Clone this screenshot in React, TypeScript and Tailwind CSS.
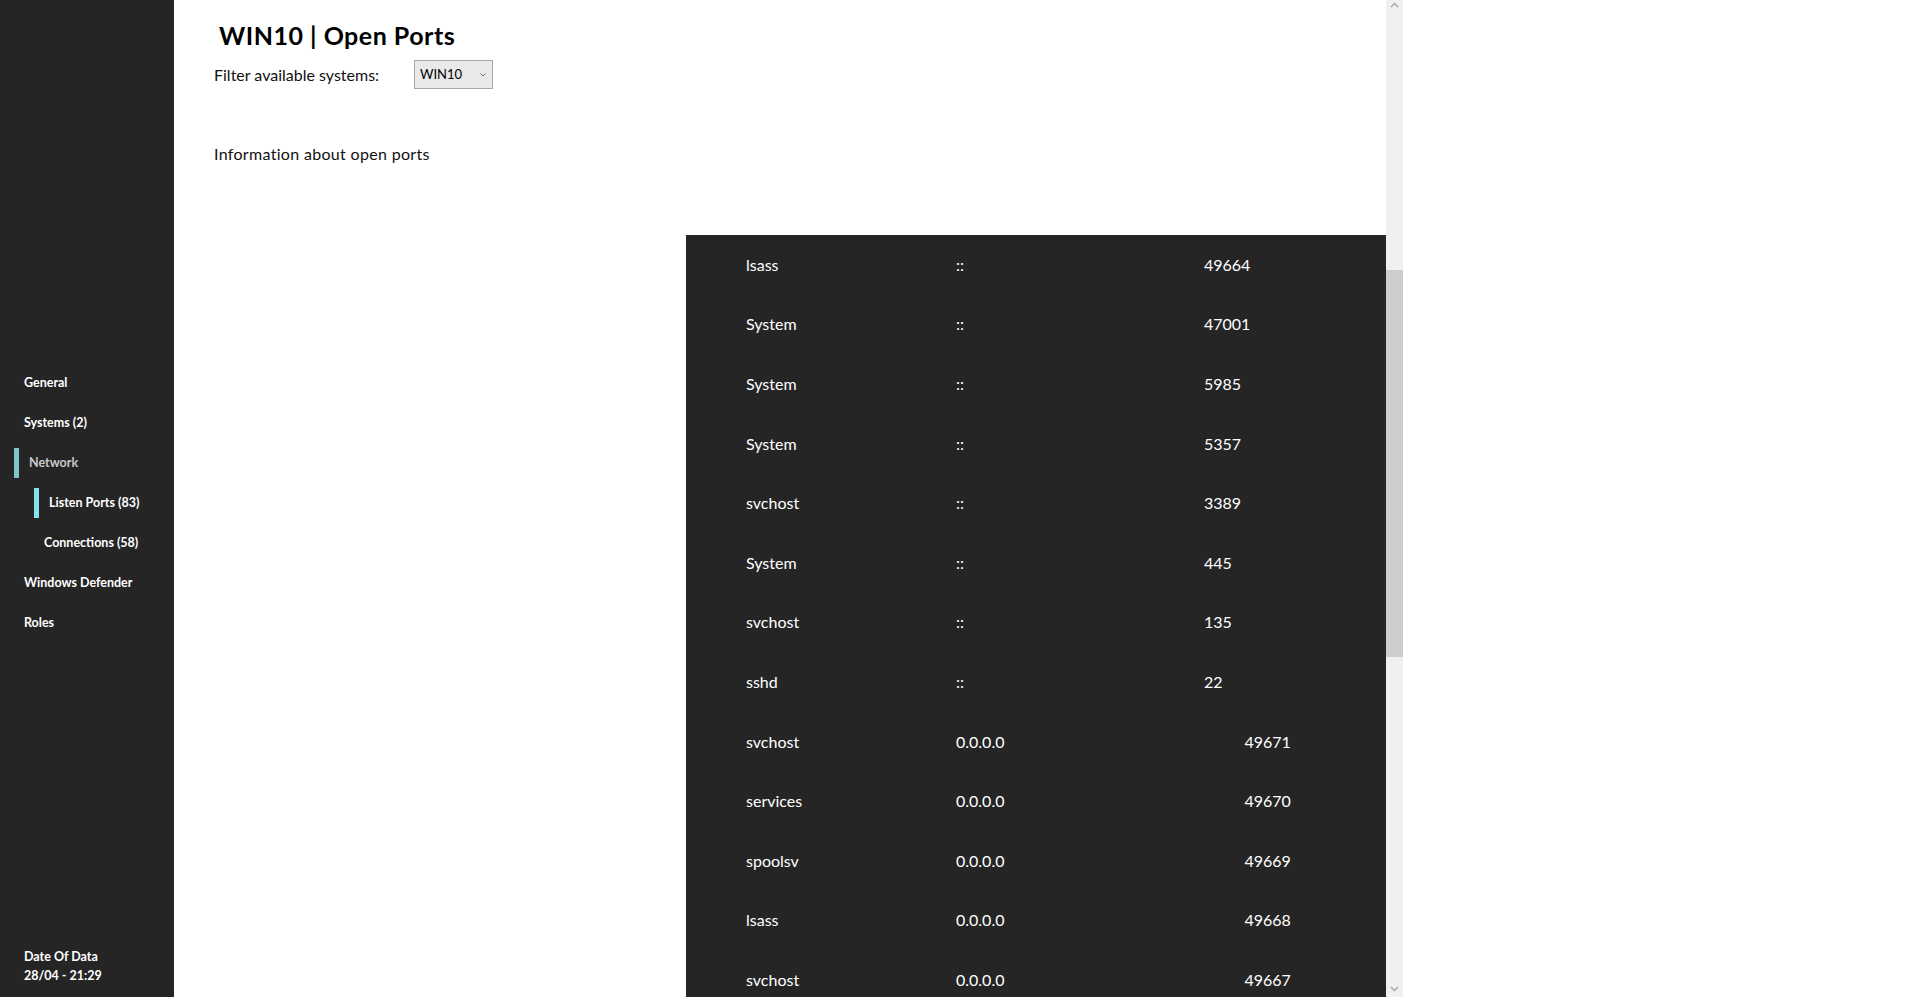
import React from 'react'

const rows = [
  ['lsass', '::', '49664'],
  ['System', '::', '47001'],
  ['System', '::', '5985'],
  ['System', '::', '5357'],
  ['svchost', '::', '3389'],
  ['System', '::', '445'],
  ['svchost', '::', '135'],
  ['sshd', '::', '22'],
  ['svchost', '0.0.0.0', '49671'],
  ['services', '0.0.0.0', '49670'],
  ['spoolsv', '0.0.0.0', '49669'],
  ['lsass', '0.0.0.0', '49668'],
  ['svchost', '0.0.0.0', '49667'],
  ['wininit', '0.0.0.0', '49666'],
  ['lsass', '0.0.0.0', '49665'],
]

function NavItem({ label, level = 0, active = false, dim = false }) {
  const pad = level === 0 ? 'pl-[24px]' : 'pl-[44px]'
  const activePad = level === 0 ? 'ml-[14px]' : 'ml-[34px]'
  return (
    <div className="h-[40px] flex items-center">
      {active ? (
        <div className={`flex items-center ${activePad}`}>
          <div className={`w-[5px] h-[30px] ${level === 0 ? 'bg-[#7ec6cb]' : 'bg-[#84e3ec]'}`}></div>
          <span className={`pl-[10px] ${dim ? 'text-[#c9c9c9]' : 'text-white'}`}>{label}</span>
        </div>
      ) : (
        <span className={`${pad} text-white`}>{label}</span>
      )}
    </div>
  )
}

function Sidebar() {
  return (
    <div className="w-[174px] shrink-0 h-full bg-[#252525] flex flex-col font-bold text-[12.5px]">
      <div className="mt-[363px]">
        <NavItem label="General" />
        <NavItem label="Systems (2)" />
        <NavItem label="Network" active dim />
        <NavItem label="Listen Ports (83)" level={1} active />
        <NavItem label="Connections (58)" level={1} />
        <NavItem label="Windows Defender" />
        <NavItem label="Roles" />
      </div>
      <div className="mt-auto pl-[24px] pb-[12px] text-white leading-[19px]">
        <div>Date Of Data</div>
        <div>28/04 - 21:29</div>
      </div>
    </div>
  )
}

function Scrollbar() {
  return (
    <div className="w-[17px] shrink-0 h-full bg-[#f0f0f0] flex flex-col items-center">
      <div className="h-[17px] w-full flex justify-center pt-[2px]">
        <svg width="9" height="6" viewBox="0 0 9 6">
          <path d="M1 5 L4.5 1.5 L8 5" stroke="#a3a3a3" strokeWidth="1.3" fill="none" />
        </svg>
      </div>
      <div className="flex-1 w-full flex flex-col">
        <div className="h-[253px]"></div>
        <div className="h-[387px] w-full bg-[#cdcdcd]"></div>
        <div className="flex-1"></div>
      </div>
      <div className="h-[17px] w-full flex justify-center items-center">
        <svg width="9" height="6" viewBox="0 0 9 6">
          <path d="M1 1 L4.5 4.5 L8 1" stroke="#a3a3a3" strokeWidth="1.3" fill="none" />
        </svg>
      </div>
    </div>
  )
}

function PortsTable() {
  return (
    <div className="ml-auto w-[700px] bg-[#252525] text-white text-[16px]">
      {rows.map(([name, addr, port], i) => (
        <div key={i} className="h-[59.6px] flex items-center pl-[60px]">
          <span className="w-[210px] shrink-0">{name}</span>
          <span className="mr-[240px]">{addr}</span>
          <span>{port}</span>
        </div>
      ))}
    </div>
  )
}

export default function App() {
  return (
    <div
      className="flex h-[997px] w-full overflow-hidden bg-white"
      style={{ fontFamily: 'Lato, "Open Sans", sans-serif' }}
    >
      <Sidebar />
      <div className="w-[1212px] shrink-0 h-full overflow-hidden flex flex-col">
        <div className="pl-[40px]">
          <h1 className="mt-[20px] ml-[5px] text-[25px] leading-[30px] font-bold text-black tracking-[0.02em]">
            WIN10 | Open Ports
          </h1>
          <div className="mt-[10px] flex items-center h-[29px]">
            <span className="w-[200px] text-[16px] text-[#111]">Filter available systems:</span>
            <div className="w-[79px] h-[29px] border border-[#a9a9a9] bg-[#e9e9e9] flex items-center pl-[5px] pr-[6px]">
              <span className="text-[13px] text-black flex-1">WIN10</span>
              <svg width="6" height="4" viewBox="0 0 6 4">
                <path d="M0.5 0.5 L3 3 L5.5 0.5" stroke="#777" strokeWidth="1" fill="none" />
              </svg>
            </div>
          </div>
          <p className="mt-[55px] text-[16px] leading-[20px] text-[#111] tracking-[0.02em]">
            Information about open ports
          </p>
        </div>
        <div className="mt-[71px] flex">
          <PortsTable />
        </div>
      </div>
      <Scrollbar />
      <div className="flex-1"></div>
    </div>
  )
}
